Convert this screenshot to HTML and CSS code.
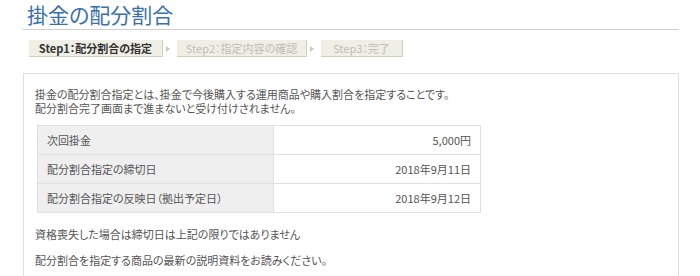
FILE: index.html
```html
<!DOCTYPE html>
<html lang="ja">
<head>
    <meta charset="UTF-8">
    <title>掛金の配分割合</title>
    <link rel="stylesheet" href="styles.css">
</head>
<body>
    <div class="page">
        <h1 class="title">掛金の配分割合</h1>

        <!-- Steps -->
        <div class="steps">
            <div class="step step-current step1">Step1：配分割合の指定</div>
            <span class="step-arrow"></span>
            <div class="step step2">Step2：指定内容の確認</div>
            <span class="step-arrow"></span>
            <div class="step step3">Step3：完了</div>
        </div>

        <div class="panel">
            <p class="lead">掛金の配分割合指定とは、掛金で今後購入する運用商品や購入割合を指定することです。<br>配分割合完了画面まで進まないと受け付けされません。</p>

            <table class="info">
                <tr>
                    <th>次回掛金</th>
                    <td>5,000円</td>
                </tr>
                <tr>
                    <th>配分割合指定の締切日</th>
                    <td>2018年9月11日</td>
                </tr>
                <tr>
                    <th>配分割合指定の反映日（拠出予定日）</th>
                    <td>2018年9月12日</td>
                </tr>
            </table>

            <p class="note">資格喪失した場合は締切日は上記の限りではありません</p>
            <p class="note">配分割合を指定する商品の最新の説明資料をお読みください。</p>
        </div>
    </div>
</body>
</html>
```

FILE: styles.css
```css
body {
    margin: 0;
    background: #fff;
    font-family: "Noto Sans CJK JP", "Liberation Sans", sans-serif;
    font-feature-settings: "palt";
    color: #555;
}
.page {
    margin: 0 21px 0 23px;
}
.title {
    margin: 0;
    padding: 0 0 0 4px;
    font-size: 21px;
    line-height: 29px;
    font-weight: normal;
    color: #3b70a8;
    border-bottom: 1px solid #cfcfcf;
}

/* Steps */
.steps {
    display: flex;
    align-items: center;
    margin: 10px 0 0 6px;
    height: 17px;
}
.step {
    height: 16px;
    line-height: 16px;
    font-size: 11px;
    text-align: center;
    background: #efefe6;
    border-right: 1px solid #cfcfc4;
    border-bottom: 1px solid #cfcfc4;
    color: #bdbdb5;
}
.step-current {
    color: #333;
    font-weight: bold;
}
.step1 { width: 133px; }
.step2 { width: 129px; }
.step3 { width: 81px; }
.step-arrow {
    width: 14px;
    display: flex;
    justify-content: center;
}
.step-arrow::before {
    content: "";
    border-left: 4px solid #c8c8c8;
    border-top: 3px solid transparent;
    border-bottom: 3px solid transparent;
    margin-right: 4px;
}

/* Panel */
.panel {
    margin-top: 16px;
    border: 1px solid #e0e0e0;
    border-bottom: none;
    padding: 13px 11px 20px 11px;
    min-height: 180px;
}
.lead {
    margin: 0;
    font-size: 11px;
    line-height: 14px;
}
.info {
    margin: 10px 0 0 2px;
    width: 444px;
    border-collapse: collapse;
    font-size: 11px;
}
.info th,
.info td {
    height: 28px;
    border: 1px solid #e0e0e0;
    padding: 0 9px;
}
.info th {
    width: 217px;
    background: #efefef;
    text-align: left;
    font-weight: normal;
}
.info td {
    text-align: right;
}
.note {
    margin: 14px 0 0 0;
    font-size: 11px;
    line-height: 14px;
}
.note + .note {
    margin-top: 12px;
}
```
